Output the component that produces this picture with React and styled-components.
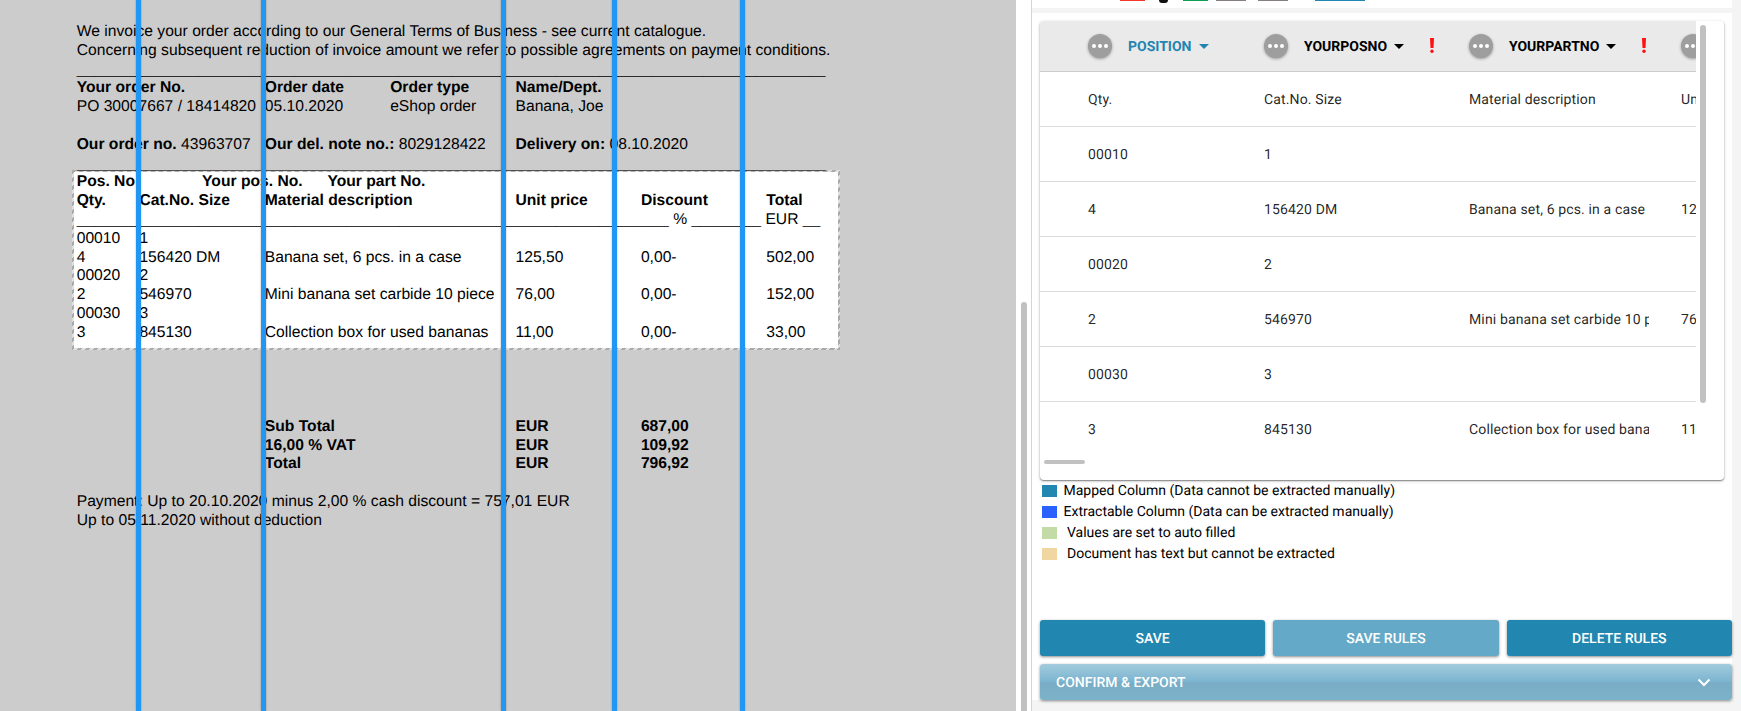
import React from 'react';
import styled, { createGlobalStyle, css } from 'styled-components';

const Global = createGlobalStyle`
  *, *::before, *::after { box-sizing: border-box; }
  body {
    margin: 0;
    background: #f4f4f4;
    overflow: hidden;
    font-family: Roboto, "Liberation Sans", sans-serif;
    text-rendering: geometricPrecision;
  }
`;

const Page = styled.div`
  display: flex;
  width: 1741px;
  height: 711px;
  overflow: hidden;
`;

/* ---- document viewer ---- */
const Viewer = styled.section`
  position: relative;
  flex: 0 0 1016px;
  overflow: hidden;
  background: #fff;
`;

const Sheet = styled.div`
  padding: 23.1px 0 0 76.7px;
  font-family: "Liberation Sans", Arial, sans-serif;
  font-size: 15.67px;
  line-height: 18.8px;
  color: #000;
`;

const Line = styled.div`
  display: grid;
  grid-template-columns: repeat(12, 62.7px);
  height: 18.8px;
  white-space: pre;
  font-weight: ${(p) => (p.$bold ? 700 : 400)};
`;

const Cell = styled.span`
  grid-row: 1;
  grid-column: ${(p) => p.$col + 1} / span 1;
`;

const Selection = styled.div`
  position: absolute;
  left: 72px;
  top: 170px;
  width: 768px;
  height: 180px;
  border: 2px solid transparent;
  border-image: repeating-linear-gradient(135deg, rgba(100, 100, 100, 0.55) 0 3.2px, rgba(150, 150, 150, 0.3) 3.2px 5.66px) 2;
  box-shadow: 0 0 0 1200px rgba(0, 0, 0, 0.2);
`;

const Guide = styled.div`
  position: absolute;
  top: 0;
  bottom: 0;
  left: ${(p) => p.$x}px;
  width: 5px;
  background: #2196f3;
  box-shadow: 0 0 2px rgba(0, 0, 0, 0.35);
`;

const Gutter = styled.div`
  flex: 0 0 16px;
  padding: 302px 0 0 5px;
  background: #fff;
  border-right: 1px solid #d4d4d4;
`;

const GutterThumb = styled.div`
  width: 6px;
  height: 420px;
  border-radius: 3px;
  background: #c1c1c1;
`;

/* ---- side panel ---- */
const Side = styled.section`
  flex: 0 0 700px;
  display: flex;
  flex-direction: column;
`;

const Strip = styled.div`
  display: flex;
  align-items: flex-start;
  height: 8px;
  padding-left: 88px;
  margin-bottom: 5px;
  background: #fff;
`;

const Chip = styled.span`
  width: ${(p) => p.$w}px;
  height: ${(p) => p.$h || 1}px;
  margin-right: ${(p) => p.$gap}px;
  background: ${(p) => p.$color};
  border-radius: ${(p) => (p.$round ? '0 0 5px 5px' : '0')};
`;

const Body = styled.div`
  height: 687px;
  padding: 8px 0 0 8px;
  background: #fff;
`;

const Card = styled.div`
  display: flex;
  width: 684px;
  height: 459px;
  border-radius: 4px;
  background: #fff;
  box-shadow: 0 1px 3px rgba(0, 0, 0, 0.3), 0 1px 1px rgba(0, 0, 0, 0.3);
`;

const TableArea = styled.div`
  width: 656px;
  overflow: hidden;
  border-top-left-radius: 4px;
`;

const grid = css`
  display: grid;
  grid-template-columns: 176px 205px 212px 200px;
  width: 841px;
  padding-left: 48px;
  align-items: center;
`;

const HeadRow = styled.div`
  ${grid}
  height: 51px;
  background: #eaeaea;
  border-bottom: 1px solid #ccc;
`;

const HeadCell = styled.div`
  display: flex;
  align-items: center;
  color: ${(p) => (p.$active ? '#2185b0' : '#000')};
  font-size: 14px;
  font-weight: 700;
  line-height: 20px;
`;

const HeadLabel = styled.span`
  padding-top: 2px;
`;

const More = styled.span`
  display: flex;
  align-items: center;
  justify-content: center;
  gap: 2px;
  width: 24px;
  height: 24px;
  margin-right: 16px;
  border-radius: 50%;
  background: #9e9e9e;
  box-shadow: 0 1px 3px rgba(0, 0, 0, 0.35);
`;

const Dot = styled.i`
  width: 4px;
  height: 4px;
  border-radius: 50%;
  background: #fff;
`;

const Caret = styled.i`
  margin: 1px 0 0 7px;
  border: 5px solid transparent;
  border-top-color: currentColor;
  border-bottom: 0;
`;

const Bang = styled.svg`
  width: 4px;
  height: 15px;
  margin: -1px 0 0 26px;
`;

const Row = styled.div`
  ${grid}
  height: 55px;
  padding-top: 1px;
  border-bottom: 1px solid ${(p) => (p.$last ? 'transparent' : '#dcdcdc')};
  color: rgba(0, 0, 0, 0.87);
  font-size: 14px;
  letter-spacing: 0.14px;
`;

const Value = styled.span`
  width: 180px;
  overflow: hidden;
  white-space: nowrap;
`;

const HThumb = styled.div`
  width: 41px;
  height: 4px;
  margin: 3px 0 0 4px;
  border-radius: 2px;
  background: #c1c1c1;
`;

const VThumb = styled.div`
  width: 6px;
  height: 378px;
  margin: 4px 0 0 4px;
  border-radius: 3px;
  background: #c1c1c1;
`;

const Legend = styled.ul`
  height: 140px;
  margin: 0;
  padding: 0 0 0 2px;
  list-style: none;
`;

const LegendItem = styled.li`
  display: flex;
  align-items: center;
  height: 21px;
  font-size: 14px;
  line-height: 19px;
  color: #000;
`;

const LegendText = styled.span`
  padding-top: 2px;
`;

const Swatch = styled.span`
  width: 15px;
  height: 12px;
  margin: 1px ${(p) => p.$gap}px 0 0;
  background: ${(p) => p.$color};
`;

const Actions = styled.div`
  display: flex;
  gap: 8px;
  margin-bottom: 8px;
`;

const Button = styled.button`
  flex: 1;
  height: 36px;
  padding: 2px 0 0;
  border: 0;
  border-radius: 3px;
  background: ${(p) => (p.$soft ? '#64a9c7' : '#2187b0')};
  box-shadow: 0 1px 3px rgba(0, 0, 0, 0.45);
  color: #fff;
  font: 500 14px/34px Roboto, sans-serif;
  text-rendering: geometricPrecision;
`;

const Confirm = styled(Button)`
  display: flex;
  align-items: center;
  justify-content: space-between;
  width: 692px;
  padding: 2px 21px 0 16px;
  background: linear-gradient(#a3cbdd 0%, #7ab4cf 50%, #79adc5 50%, #7bb2ca 100%);
`;

const HEADERS = [
  { label: 'POSITION', active: true },
  { label: 'YOURPOSNO', missing: true },
  { label: 'YOURPARTNO', missing: true },
  { label: 'UNITPRICE' },
];

const ROWS = [
  ['Qty.', 'Cat.No. Size', 'Material description', 'Unit price'],
  ['00010', '1', '', ''],
  ['4', '156420 DM', 'Banana set, 6 pcs. in a case', '125,50'],
  ['00020', '2', '', ''],
  ['2', '546970', 'Mini banana set carbide 10 piece', '76,00'],
  ['00030', '3', '', ''],
  ['3', '845130', 'Collection box for used bananas', '11,00'],
];

const LEGEND = [
  ['#2187b0', 'Mapped Column (Data cannot be extracted manually)', 6.5],
  ['#2962ff', 'Extractable Column (Data can be extracted manually)', 6.5],
  ['#c3dca7', 'Values are set to auto filled', 10],
  ['#f0d6a0', 'Document has text but cannot be extracted', 10],
];

const B = styled.b``;
const RULE = '_'.repeat(86);

/* Each line: [bold, [column, content], ...] */
const LINES = [
  [0, [0, 'We invoice your order according to our General Terms of Business - see current catalogue.']],
  [0, [0, 'Concerning subsequent reduction of invoice amount we refer to possible agreements on payment conditions.']],
  [0, [0, RULE]],
  [1, [0, 'Your order No.'], [3, 'Order date'], [5, 'Order type'], [7, 'Name/Dept.']],
  [0, [0, 'PO 30007667 / 18414820'], [3, '05.10.2020'], [5, 'eShop order'], [7, 'Banana, Joe']],
  [0],
  [0, [0, <><B>Our order no.</B> 43963707</>], [3, <><B>Our del. note no.:</B> 8029128422</>], [7, <><B>Delivery on:</B> 08.10.2020</>]],
  [0, [0, RULE]],
  [1, [0, 'Pos. No'], [2, 'Your pos. No.'], [4, 'Your part No.']],
  [1, [0, 'Qty.'], [1, 'Cat.No. Size'], [3, 'Material description'], [7, 'Unit price'], [9, 'Discount'], [11, 'Total']],
  [0, [0, `${'_'.repeat(68)} % ${'_'.repeat(8)} EUR __`]],
  [0, [0, '00010'], [1, '1']],
  [0, [0, '4'], [1, '156420 DM'], [3, 'Banana set, 6 pcs. in a case'], [7, '125,50'], [9, '0,00-'], [11, '502,00']],
  [0, [0, '00020'], [1, '2']],
  [0, [0, '2'], [1, '546970'], [3, 'Mini banana set carbide 10 piece'], [7, '76,00'], [9, '0,00-'], [11, '152,00']],
  [0, [0, '00030'], [1, '3']],
  [0, [0, '3'], [1, '845130'], [3, 'Collection box for used bananas'], [7, '11,00'], [9, '0,00-'], [11, '33,00']],
  [0], [0], [0], [0],
  [1, [3, 'Sub Total'], [7, 'EUR'], [9, '687,00']],
  [1, [3, '16,00 % VAT'], [7, 'EUR'], [9, '109,92']],
  [1, [3, 'Total'], [7, 'EUR'], [9, '796,92']],
  [0],
  [0, [0, 'Payment: Up to 20.10.2020 minus 2,00 % cash discount = 757,01 EUR']],
  [0, [0, 'Up to 05.11.2020 without deduction']],
];

export default function App() {
  return (
    <Page>
      <Global />
      <Viewer>
        <Sheet>
          {LINES.map(([bold, ...cells], i) => (
            <Line key={i} $bold={bold}>
              {cells.map(([col, text]) => <Cell key={col} $col={col}>{text}</Cell>)}
            </Line>
          ))}
        </Sheet>
        <Selection />
        {[136, 261, 501, 612, 740].map((x) => <Guide key={x} $x={x} />)}
      </Viewer>
      <Gutter><GutterThumb /></Gutter>
      <Side>
        <Strip>
          <Chip $w={25} $gap={14} $color="#f4362c" />
          <Chip $w={9} $h={3} $gap={15} $color="#111" $round />
          <Chip $w={25} $gap={8} $color="#0d9f54" />
          <Chip $w={30} $gap={12} $color="#857f7f" />
          <Chip $w={30} $gap={27} $color="#857f7f" />
          <Chip $w={50} $gap={0} $color="#2187b0" />
        </Strip>
        <Body>
          <Card>
            <TableArea>
              <HeadRow>
                {HEADERS.map((h) => (
                  <HeadCell key={h.label} $active={h.active}>
                    <More><Dot /><Dot /><Dot /></More>
                    <HeadLabel>{h.label}</HeadLabel>
                    <Caret />
                    {h.missing && (
                      <Bang viewBox="0 0 4 15">
                        <path d="M0 0h4l-.5 10h-3z" fill="#f11" />
                        <circle cx="2" cy="13.2" r="1.7" fill="#f11" />
                      </Bang>
                    )}
                  </HeadCell>
                ))}
              </HeadRow>
              {ROWS.map((r, i) => (
                <Row key={r[0]} $last={i === ROWS.length - 1}>
                  {r.map((v, j) => <Value key={j}>{v}</Value>)}
                </Row>
              ))}
              <HThumb />
            </TableArea>
            <VThumb />
          </Card>
          <Legend>
            {LEGEND.map(([color, text, gap]) => (
              <LegendItem key={text}>
                <Swatch $color={color} $gap={gap} />
                <LegendText>{text}</LegendText>
              </LegendItem>
            ))}
          </Legend>
          <Actions>
            <Button>SAVE</Button>
            <Button $soft>SAVE RULES</Button>
            <Button>DELETE RULES</Button>
          </Actions>
          <Confirm>
            CONFIRM &amp; EXPORT
            <svg width="14" height="10" viewBox="0 0 14 10" fill="none" stroke="#fff" strokeWidth="2">
              <path d="M1.5 1.5l5.5 5.5L12.5 1.5" />
            </svg>
          </Confirm>
        </Body>
      </Side>
    </Page>
  );
}
